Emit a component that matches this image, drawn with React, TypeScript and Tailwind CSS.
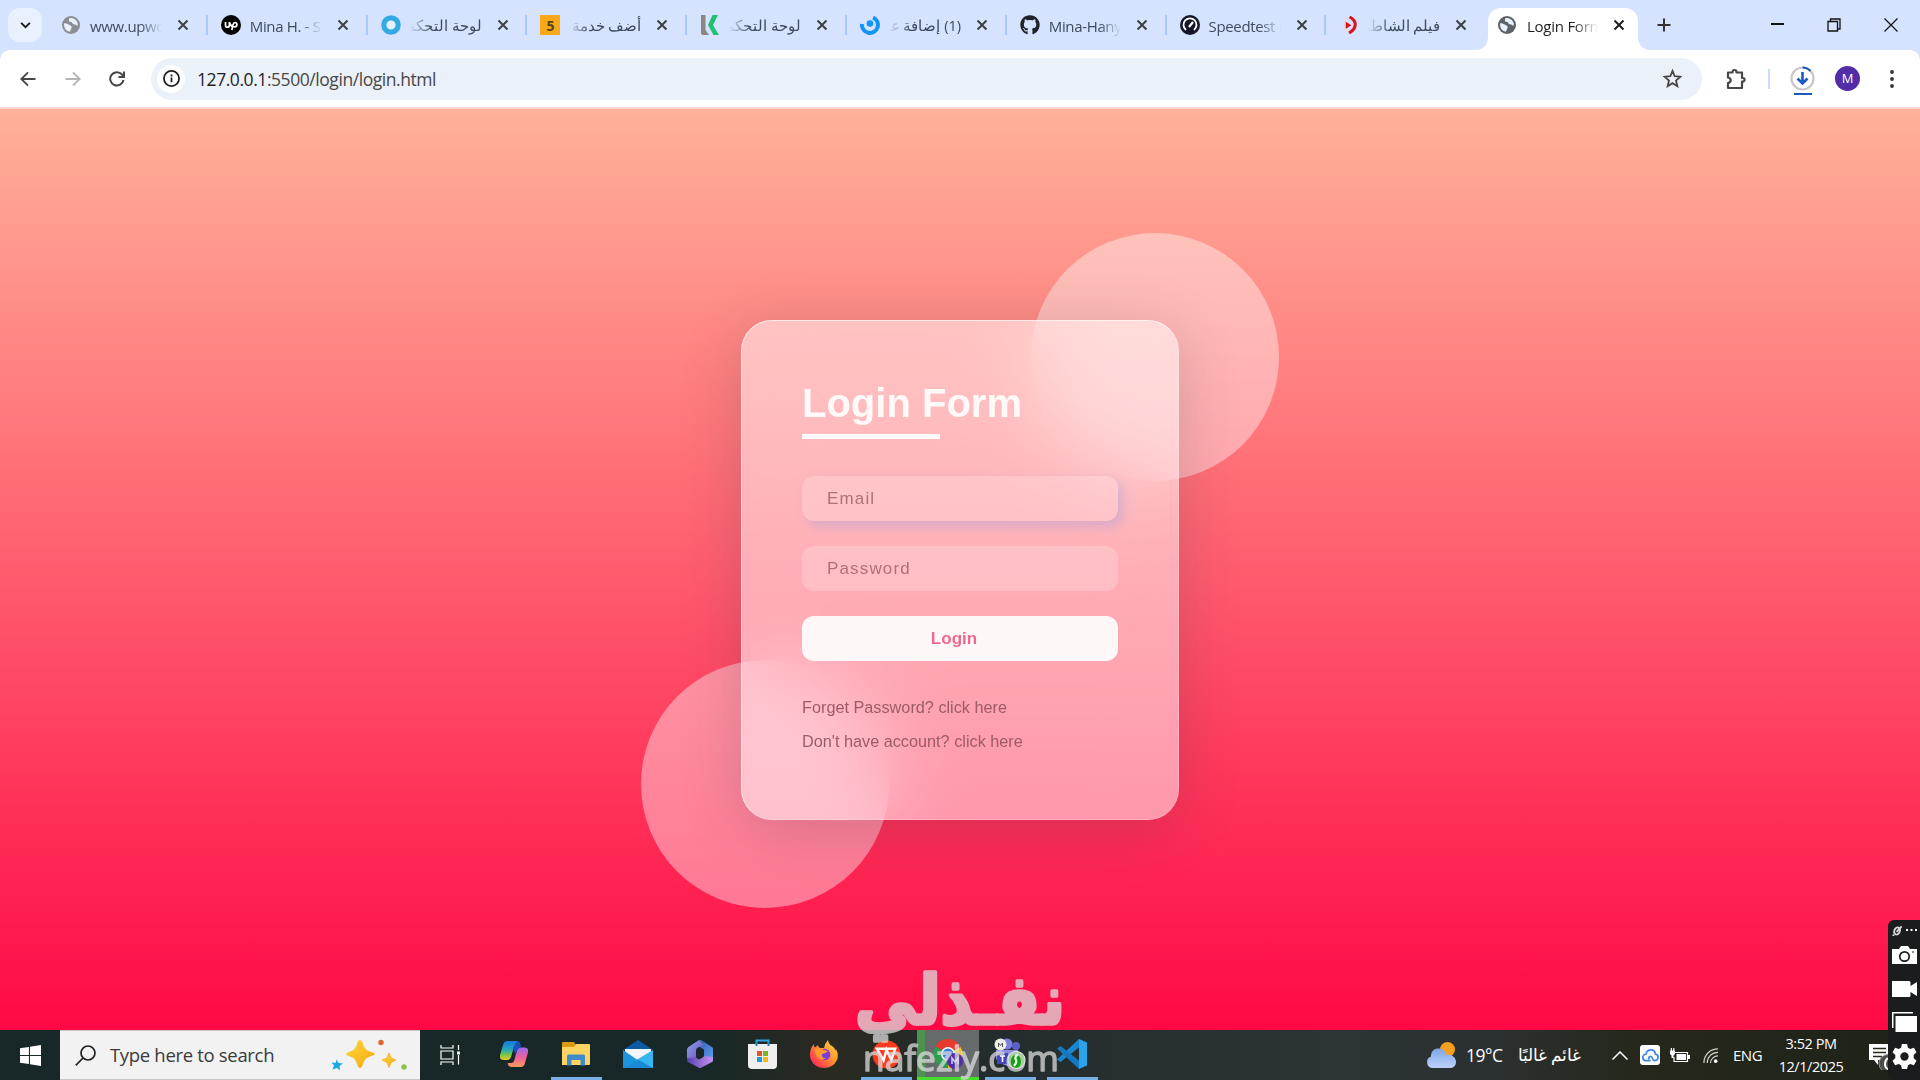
import React from "react";
import { FaGithub } from "react-icons/fa";

type TabData = { title: string; rtl?: boolean; icon: React.ReactNode };

const Globe = ({ color }: { color: string }) => (
  <svg viewBox="0 0 18 18" className="size-[18px]">
    <circle cx="9" cy="9" r="9" fill={color} />
    <path d="M2 7.500 C4 7 5 8 6.500 8.500 C8.500 9.300 10.500 10.500 9.500 12 C8.600 13.200 8.800 15 7.600 15.700 C4 15 2 12.500 2 7.500Z" fill="#e8f0fc" />
    <path d="M7.500 2 C11.500 1.500 15 4 15.800 7.500 C16 10.500 14.500 10 13.500 8.500 C12.300 8.600 10 8.300 10.200 6.800 C10.500 5.500 7.500 6.800 7 5 C6.800 3.500 7.200 2.700 7.500 2Z" fill="#e8f0fc" />
  </svg>
);

const tabs: TabData[] = [
  { title: "www.upwork", icon: <Globe color="#8a8d91" /> },
  {
    title: "Mina H. - Sen",
    icon: (
      <svg viewBox="0 0 20 20" className="size-5">
        <circle cx="10" cy="10" r="10" fill="#000" />
        <path d="M4.500 7v3.200q0 2 1.900 2t1.900-2V7 M8.300 7q1.300 4 3.200 5M10.800 15l1.200-5.200q.6-2.300 2.200-2.300t1.700 2q0 2.300-2 2.300-1.800 0-3.500-2" fill="none" stroke="#fff" strokeWidth="1.700" />
      </svg>
    ),
  },
  {
    title: "لوحة التحكم",
    rtl: true,
    icon: (
      <svg viewBox="0 0 20 20" className="size-5">
        <circle cx="10" cy="10" r="7.200" fill="#e4f1ff" stroke="#35aae2" strokeWidth="5.200" />
      </svg>
    ),
  },
  {
    title: "أضف خدمة",
    rtl: true,
    icon: <span className="flex size-5 items-center justify-center bg-[#f9a81a] text-[14px] font-bold text-[#54430f]">5</span>,
  },
  {
    title: "لوحة التحكم",
    rtl: true,
    icon: (
      <svg viewBox="0 0 18 20" className="h-5 w-[18px]">
        <path d="M0 0h4.500v15l3.500 5H2q-2 0-2-2z" fill="#8a8580" />
        <path d="M11.500 0H17L12 10l6 10h-5.500L7 10z" fill="#1fc274" />
      </svg>
    ),
  },
  {
    title: "(1) إضافة عمل",
    rtl: true,
    icon: (
      <svg viewBox="0 0 20 20" className="size-5">
        <path d="M2 9a8 8 0 1 0 11-6.500" fill="none" stroke="#1295f7" strokeWidth="4" />
        <circle cx="10" cy="8.500" r="3.300" fill="#1295f7" />
      </svg>
    ),
  },
  { title: "Mina-Hany", icon: <FaGithub className="size-5 text-[#1f2328]" /> },
  {
    title: "Speedtest b",
    icon: (
      <svg viewBox="0 0 20 20" className="size-5">
        <circle cx="10" cy="10" r="10" fill="#14152b" />
        <path d="M6 15a6.500 6.500 0 1 1 8 0" fill="none" stroke="#fff" strokeWidth="1.800" />
        <path d="M9 12l4-5" stroke="#fff" strokeWidth="2.200" />
      </svg>
    ),
  },
  {
    title: "فيلم الشاطر",
    rtl: true,
    icon: (
      <svg viewBox="0 0 18 18" className="ml-[3px] size-[18px]">
        <path d="M6 2C1 5 1 12 6 16" fill="none" stroke="#e0dcdc" strokeWidth="2" />
        <path d="M8 0.500q6.500 3.500 6 8.500t-6.500 8.500" fill="none" stroke="#d8121f" strokeWidth="3.200" />
        <path d="M4 5.500l6 3.700L4 13z" fill="#d8121f" />
      </svg>
    ),
  },
];

const Cross = ({ color = "#3c4043" }: { color?: string }) => (
  <svg viewBox="0 0 12 12" className="size-3 shrink-0">
    <path d="M1.500 1.500l9 9M10.500 1.500l-9 9" stroke={color} strokeWidth="2" />
  </svg>
);

function Tab({ tab, divider }: { tab: TabData; divider: boolean }) {
  return (
    <div className="flex h-[50px] w-[159.800px] shrink-0 items-center pl-[13px]">
      <span className="flex w-5 shrink-0 justify-center">{tab.icon}</span>
      {tab.rtl ? (
        <span dir="rtl" className="mt-[2px] ml-[9px] w-[72px] overflow-hidden text-[14.500px] leading-6 tracking-[-0.100px] whitespace-nowrap text-[#3f4a5c] [mask-image:linear-gradient(to_left,black_70%,transparent)]">
          {tab.title}
        </span>
      ) : (
        <span className="mt-[2px] ml-[9px] w-[72px] overflow-hidden text-[15px] leading-6 tracking-[-0.350px] whitespace-nowrap text-[#3f4a5c] [mask-image:linear-gradient(to_right,black_70%,transparent)]">
          {tab.title}
        </span>
      )}
      <span className="ml-[15px] flex w-3">
        <Cross />
      </span>
      {divider && <span className="ml-auto h-5 w-[2px] bg-[#a8c7fa]" />}
    </div>
  );
}

function TabStrip() {
  return (
    <div className="flex h-[50px] bg-[#d5e3ff]">
      <div className="mt-2 ml-2 flex h-[34px] w-[34px] items-center justify-center rounded-xl bg-[#e9f1fe]">
        <svg viewBox="0 0 12 8" className="h-[7px] w-[11px]">
          <path d="M1 1l5 5 5-5" fill="none" stroke="#1f1f1f" strokeWidth="2.200" />
        </svg>
      </div>
      <div className="ml-[6px] flex w-[1431px]">
        {tabs.map((t, i) => (
          <Tab key={i} tab={t} divider={i !== tabs.length - 1} />
        ))}
      </div>
      <div className="-ml-[5px] flex h-[50px] items-end">
        <svg viewBox="0 0 14 14" className="size-[14px]">
          <path d="M14 0v14H0Q14 14 14 0z" fill="#fff" />
        </svg>
        <div className="flex h-[42.500px] w-[150px] items-center rounded-t-[13px] bg-white pb-[7px] pl-[9px]">
          <span className="flex w-5 justify-center">
            <Globe color="#5f6368" />
          </span>
          <span className="mt-[2px] ml-[10px] w-[71px] overflow-hidden text-[15px] leading-6 tracking-[-0.250px] whitespace-nowrap text-[#1f1f1f] [mask-image:linear-gradient(to_right,black_65%,transparent)]">
            Login Form
          </span>
          <span className="ml-[15px] flex">
            <Cross color="#1f1f1f" />
          </span>
        </div>
        <svg viewBox="0 0 14 14" className="size-[14px]">
          <path d="M0 0v14h14Q0 14 0 0z" fill="#fff" />
        </svg>
      </div>
      <div className="flex flex-1 items-center">
        <svg viewBox="0 0 14 14" className="ml-[5px] size-[14px]">
          <path d="M7 .5v13M.5 7h13" stroke="#333" strokeWidth="2" />
        </svg>
        <span className="mb-[2px] ml-[100px] h-[1.500px] w-[13px] bg-[#111]" />
        <svg viewBox="0 0 14 14" className="ml-[43px] size-[14px]" fill="none" stroke="#111" strokeWidth="1.300">
          <path d="M1 3.500h9.500v9.500H1zM3.500 3.500V1H13v10h-2.500" />
        </svg>
        <svg viewBox="0 0 14 14" className="ml-[43px] size-[14px]">
          <path d="M.5 .5l13 13M13.500 .5l-13 13" stroke="#111" strokeWidth="1.200" />
        </svg>
      </div>
    </div>
  );
}

function Toolbar() {
  return (
    <div className="bg-[#d5e3ff]">
      <div className="flex h-[57px] items-center rounded-t-[10px] bg-white pr-[26px] pl-5">
        <svg viewBox="0 0 16 16" className="size-4" fill="none" stroke="#474747" strokeWidth="1.900">
          <path d="M15.500 8H1.500M8 1.300L1.300 8 8 14.700" />
        </svg>
        <svg viewBox="0 0 16 16" className="ml-[29px] size-4" fill="none" stroke="#b4b4b4" strokeWidth="1.900">
          <path d="M.5 8h14M8 1.300L14.700 8 8 14.700" />
        </svg>
        <svg viewBox="0 0 16 16" className="ml-[28px] size-4" fill="none" stroke="#474747" strokeWidth="2">
          <path d="M14.500 9A6.700 6.700 0 1 1 13 3.500L14.500 5.500M15 .5V6H9.500" />
        </svg>
        <div className="ml-[26px] flex h-[42px] w-[1551px] items-center rounded-full bg-[#ebf1f9] pr-5 pl-[6px]">
          <span className="flex size-7 items-center justify-center rounded-full bg-white">
            <svg viewBox="0 0 18 18" className="size-[17px]" fill="none" stroke="#1f1f1f" strokeWidth="1.900">
              <circle cx="9" cy="9" r="8" />
              <path d="M9 8v5M9 4.800v2" />
            </svg>
          </span>
          <span className="mt-[2px] ml-3 text-[17.500px] tracking-[-0.440px] whitespace-nowrap text-[#474747]">
            <span className="text-[#1f1f1f]">127.0.0.1</span>:5500/login/login.html
          </span>
          <svg viewBox="0 0 20 20" className="ml-auto size-[19px]" fill="none" stroke="#474747" strokeWidth="1.900">
            <path d="M10 2l2.300 5.600 6 .5-4.600 4 1.400 6L10 14.900 4.900 18.100l1.400-6-4.600-4 6-.5z" />
          </svg>
        </div>
        <svg viewBox="0 0 22 22" className="ml-[23px] size-[22px]" fill="none" stroke="#474747" strokeWidth="2.200">
          <path d="M3 4.500h4.500V4a2 2 0 0 1 4 0v.5H17V10h.8a1.800 1.800 0 0 1 0 3.600H17V20H3v-5c3.500-.5 3.500-5 0-5.500z" strokeLinejoin="round" />
        </svg>
        <span className="ml-[21px] h-5 w-[2px] bg-[#c9dcfb]" />
        <div className="ml-[20px] flex w-[25px] flex-col items-center pt-1">
          <svg viewBox="0 0 25 25" className="size-[25px]" fill="none">
            <circle cx="12.500" cy="12.500" r="11" stroke="#c7c7cc" strokeWidth="2.200" />
            <path d="M12.500 1.500a11 11 0 0 1 8 3.500" stroke="#1a5bbf" strokeWidth="2.200" />
            <path d="M12.500 6v11M7.500 12.500l5 5 5-5" stroke="#1a5bbf" strokeWidth="2.600" />
          </svg>
          <span className="mt-[2px] h-[2.500px] w-[18px] bg-[#1a5bbf]" />
        </div>
        <span className="ml-5 flex size-[25px] items-center justify-center rounded-full bg-[#512da8] text-[13px] text-white">M</span>
        <svg viewBox="0 0 4 18" className="ml-auto h-[18px] w-[4px]" fill="#333">
          <circle cx="2" cy="2" r="1.900" />
          <circle cx="2" cy="9" r="1.900" />
          <circle cx="2" cy="16" r="1.900" />
        </svg>
      </div>
      <div className="h-[2px] bg-[#f7d7d0]" />
    </div>
  );
}

function LoginPage() {
  return (
    <div className="flex h-[921px] items-center justify-center bg-[linear-gradient(to_bottom,#ffb199,#ff0844)] font-['Liberation_Sans',Arial,sans-serif]">
      <div className="relative h-[500px] w-[438px]">
        <span className="absolute -top-[87px] -right-[100px] size-[248px] rounded-full bg-white/40" />
        <span className="absolute -bottom-[88px] -left-[100px] size-[248px] rounded-full bg-white/40" />
        <div className="relative flex h-full flex-col rounded-[31px] border border-t-white/60 border-r-white/20 border-b-white/20 border-l-white/60 bg-white/50 px-[60px] pt-[60px] shadow-[0_10px_62px_rgba(45,50,60,0.2)] backdrop-blur-[38px]">
          <h1 className="-mt-[1px] text-[40px] leading-[46px] font-bold whitespace-nowrap text-[#fff9f8]">Login Form</h1>
          <span className="mt-[8px] h-[5px] w-[138px] bg-[#fff9f8]" />
          <div className="mt-[37px] flex h-[45px] items-center rounded-[12px] bg-white/20 pt-[2px] pl-[25px] text-[17px] tracking-[1.150px] text-[#ac7278] shadow-[5px_5px_12px_rgba(150,160,225,0.4)]">
            Email
          </div>
          <div className="mt-[25px] flex h-[45px] items-center rounded-[12px] bg-white/20 pt-[2px] pl-[25px] text-[17px] tracking-[1.150px] text-[#ac7278]">
            Password
          </div>
          <button className="mt-[25px] flex h-[45px] items-center justify-center rounded-[12px] bg-[#fdf8f7] pt-[2px] pr-[12px] text-[17px] font-bold text-[#ec6a90]">
            Login
          </button>
          <p className="mt-[37px] text-[16.250px] leading-[19px] text-[#9c5b67]">Forget Password? click here</p>
          <p className="mt-[15px] text-[16.250px] leading-[19px] text-[#9c5b67]">Don't have account? click here</p>
        </div>
      </div>
    </div>
  );
}

const Copilot = () => (
  <svg viewBox="0 0 28 26" className="h-[26px] w-7">
    <defs>
      <linearGradient id="cpA" x1="0" y1="0" x2="0" y2="1">
        <stop offset="0" stopColor="#1675e0" />
        <stop offset=".45" stopColor="#25a8b8" />
        <stop offset=".75" stopColor="#7ec93f" />
        <stop offset="1" stopColor="#f0c62c" />
      </linearGradient>
      <linearGradient id="cpB" x1="0" y1="0" x2="0" y2="1">
        <stop offset="0" stopColor="#9a6be8" />
        <stop offset=".5" stopColor="#ee5f9d" />
        <stop offset="1" stopColor="#fb9b57" />
      </linearGradient>
    </defs>
    <path d="M7 0h10q2.500 0 3.500 4h-4q-2 0-2.700 2.500L11 16q-1 3-4 3H4q-5 0-4-5L3 4q1-4 4-4z" fill="url(#cpA)" />
    <path d="M21 6.500h3.500q4.500 0 3.500 5L25 22q-1 4-4 4H11q-2.500 0-3.500-4H11q2.500 0 3.200-2.500l2.800-10q1-3 4-3z" fill="url(#cpB)" />
    <path d="M17 0q2.500 0 3.500 4l.7 2.500q-3.200.2-4.200 3.500l-1.200 4L13 7z" fill="#1c4fc0" />
  </svg>
);

const Explorer = () => (
  <svg viewBox="0 0 28 24" className="h-6 w-7">
    <path d="M0 1q0-1 1-1h11l2 3v4H0z" fill="#d99b12" />
    <path d="M0 5h12l2-3h13q1 0 1 1v19q0 1-1 1H0z" fill="#fcd462" />
    <path d="M5 23.500V14q0-1.500 1.500-1.500h15Q23 12.500 23 14v9.500h-4.500V18h-9v5.500z" fill="#3f8ac9" />
  </svg>
);

const Mail = () => (
  <svg viewBox="0 0 30 28" className="h-7 w-[30px]">
    <path d="M0 10L15 0l15 10z" fill="#0c59a4" />
    <path d="M2 9h26v12H2z" fill="#f2f5fb" />
    <path d="M0 10l16 11L0 28z" fill="#1c94dc" />
    <path d="M30 10v18H0z" fill="#35b6ef" />
    <path d="M30 28L15 19.500 0 28z" fill="#1b8ad6" />
  </svg>
);

const M365 = () => (
  <svg viewBox="0 0 26 28" className="h-7 w-[26px]">
    <defs>
      <linearGradient id="mA" x1="0" y1="0" x2="1" y2="1">
        <stop offset="0" stopColor="#8fa4ea" />
        <stop offset="1" stopColor="#6a4cc0" />
      </linearGradient>
      <linearGradient id="mB" x1="0" y1="0" x2="1" y2="0">
        <stop offset="0" stopColor="#5a3fb0" />
        <stop offset="1" stopColor="#c793f3" />
      </linearGradient>
      <linearGradient id="mC" x1="0" y1="0" x2="1" y2="1">
        <stop offset="0" stopColor="#2f5aa8" />
        <stop offset="1" stopColor="#62a0f5" />
      </linearGradient>
    </defs>
    <path d="M12 0q1-.5 2 0l11 7q1 .6 1 2v11q0 1.500-1.500 2L17 18V9.500L9 5z" fill="url(#mC)" />
    <path d="M12 0L1.500 7Q0 8 0 9.500V20l9-2.500v-7q0-2 2-3l5-2.500z" fill="url(#mA)" />
    <path d="M0 18v2q0 1.200 1 1.900L12 27.700q1 .5 2 0L25 22q1-.8 1-2v-3l-9-1-4 3q-1 .6-2 0l-2-1.500z" fill="url(#mB)" />
    <path d="M13 8.800l4 2.500v5l-4 2.700-4-2.700v-5z" fill="#1a2628" />
  </svg>
);

const Store = () => (
  <svg viewBox="0 0 29 30" className="h-[30px] w-[29px]">
    <path d="M8.500 7V1.500h12V7" fill="none" stroke="#2ba6de" strokeWidth="2" />
    <path d="M0 5h29v21q0 4-4 4H4q-4 0-4-4z" fill="#efefef" />
    <path d="M9 12h5v5H9z" fill="#e4572e" />
    <path d="M15 12h5v5h-5z" fill="#7bb528" />
    <path d="M9 18h5v5H9z" fill="#1c9bd8" />
    <path d="M15 18h5v5h-5z" fill="#f5b81a" />
    <path d="M8.500 7V3M20.500 7V3" stroke="#1583b8" strokeWidth="2" />
  </svg>
);

const Firefox = () => (
  <svg viewBox="0 0 28 28" className="size-7">
    <defs>
      <linearGradient id="ffA" x1="1" y1="0" x2="0" y2="1">
        <stop offset="0" stopColor="#ffe53f" />
        <stop offset=".45" stopColor="#ff9130" />
        <stop offset=".8" stopColor="#ff3d50" />
        <stop offset="1" stopColor="#e3197c" />
      </linearGradient>
    </defs>
    <path d="M3.500 4q0 2 1.500 3.500L8 5q0 2 2 3h4q1-5 4-8 .5 4 4 6t3 5l1-2q3 6 1 11-4 8-13 8T1 20Q-2 12 3.500 4z" fill="url(#ffA)" />
    <circle cx="14.500" cy="14.500" r="5.800" fill="#7a3be0" />
    <path d="M5 9q4-2 9 1l4 1q-2 2.500-6 3-1 4 4 4.500-6 3-9-2T5 9z" fill="#ff9a2c" />
  </svg>
);

const Wps = () => (
  <svg viewBox="0 0 30 30" className="size-[29px]">
    <circle cx="15" cy="15" r="14.500" fill="#fb3b1e" />
    <path d="M5 9h19l-4 12-5-11-3 11z" fill="none" stroke="#fff" strokeWidth="2.500" />
  </svg>
);

const Chrome = () => (
  <svg viewBox="0 0 30 30" className="size-[30px]">
    <path d="M15 15L2.500 7.500A14 14 0 0 1 27.500 8z" fill="#e53a2e" />
    <path d="M15 15l12.500-7A14 14 0 0 1 15 29z" fill="#fbc116" />
    <path d="M15 15v14A14 14 0 0 1 2.500 7.500z" fill="#2b9f4b" />
    <circle cx="15" cy="15" r="7" fill="#fff" />
    <circle cx="15" cy="15" r="5.500" fill="#3b7ded" />
    <circle cx="22" cy="22" r="8" fill="#512da8" />
    <path d="M19 25v-6l3 4 3-4v6" fill="none" stroke="#d8c9f5" strokeWidth="1.500" />
  </svg>
);

const Teams = () => (
  <svg viewBox="0 0 32 32" className="size-8">
    <path d="M2 12h22v9q0 7-8 7T2 21z" fill="#8b8ce8" />
    <circle cx="13" cy="6" r="5.500" fill="#7d7fe0" />
    <circle cx="22" cy="8" r="4" fill="#5b5fc7" />
    <path d="M3 15h11v11H3z" fill="#4347b8" />
    <path d="M6 18h5M8.500 18v6" stroke="#fff" strokeWidth="1.600" />
    <circle cx="6.500" cy="6.500" r="6" fill="#eceee4" />
    <path d="M4.500 9V5l2 2.500 2-2.500v4" fill="none" stroke="#555" />
    <circle cx="22.500" cy="22" r="9" fill="#fff" />
    <circle cx="22.500" cy="22" r="8" fill="#13a10e" />
    <path d="M24 16q-4 3-2 6 1 3-2 6" fill="none" stroke="#fff" strokeWidth="2.200" />
  </svg>
);

const VsCode = () => (
  <svg viewBox="0 0 30 30" className="size-[30px]">
    <path d="M22 0l8 3.500v23L22 30z" fill="#2aa3ea" />
    <path d="M22 0v8.500L3.500 23 0 20.500z" fill="#1a86d2" />
    <path d="M22 30v-8.500L3.500 7 0 9.500z" fill="#1478c0" />
  </svg>
);

const TaskView = () => (
  <svg viewBox="0 0 20 20" className="size-5" fill="none" stroke="#fff" strokeWidth="1.200">
    <path d="M1 0v3h12V0M1 20v-3h12v3M1 6h12v8H1zM18.500 0v5M18.500 10v9.500" />
    <path d="M17 6.500h3v3h-3z" fill="#fff" stroke="none" />
  </svg>
);

const apps: { icon: React.ReactNode; bar?: string }[] = [
  { icon: <Copilot /> },
  { icon: <Explorer />, bar: "blue" },
  { icon: <Mail /> },
  { icon: <M365 /> },
  { icon: <Store /> },
  { icon: <Firefox /> },
  { icon: <Wps />, bar: "blue" },
  { icon: <Chrome />, bar: "green" },
  { icon: <Teams />, bar: "blue" },
  { icon: <VsCode />, bar: "blue" },
];

function Taskbar() {
  return (
    <div className="flex h-[50px] bg-[linear-gradient(to_right,#182828_0%,#182828_37%,#2a2a20_43%,#232c2c_50%,#2c3436_70%,#2b3030_78%,#25281b_85%,#1f2217_100%)]">
      <div className="flex w-[60px] items-center justify-center">
        <svg viewBox="0 0 20 20" className="size-[21px]" fill="#fff">
          <path d="M0 3l8.500-1.200v7.700H0zM9.500 1.600L20 0v9.500H9.500zM0 10.500h8.500v7.700L0 17zM9.500 10.500H20V20L9.500 18.400z" />
        </svg>
      </div>
      <div className="flex w-[360px] items-center border-y border-[#c8c8c8] bg-[#f2f2f2] pl-[15px]">
        <svg viewBox="0 0 21 21" className="size-[21px]" fill="none" stroke="#222" strokeWidth="1.700">
          <circle cx="13" cy="8" r="7" />
          <path d="M8 13L.8 20.300" />
        </svg>
        <span className="ml-[14px] text-[18.500px] tracking-[-0.320px] whitespace-nowrap text-[#3a3a3a]">Type here to search</span>
        <svg viewBox="0 0 76 32" className="mr-[13px] ml-auto h-8 w-[76px]">
          <defs>
            <linearGradient id="st" x1="0" y1="0" x2="1" y2="1">
              <stop offset="0" stopColor="#ffd93b" />
              <stop offset="1" stopColor="#f3a712" />
            </linearGradient>
          </defs>
          <path d="M29 1q2 0 3 4 1.500 6 7 7.500 5 1.500 5 2.500t-5 2.500Q33.500 19 32 25q-1 4-3 4t-3-4q-1.500-6-7-7.500-4-1.500-4-2.500t4-2.500Q24.500 11 26 5q1-4 3-4z" fill="url(#st)" />
          <path d="M58 14l2 5 5 2-5 2.500-2 5-2-5-5-2.500 5-2z" fill="url(#st)" stroke="#f5b92a" />
          <path d="M6 20q.5 3.500 1.500 4l4.500.5-3.500 2.500.5 4.500-3-2.500-4.500 1.500 1.500-4-2.500-3 4 .5z" fill="#19a9e5" />
          <circle cx="50" cy="3.500" r="2.700" fill="#e0652b" />
          <circle cx="73" cy="28" r="2.700" fill="#8bc34a" />
        </svg>
      </div>
      <div className="flex w-[63px] items-center justify-center pr-[3px] pb-[1px]">
        <TaskView />
      </div>
      {apps.map((a, i) => (
        <div
          key={i}
          className={`flex w-[62px] flex-col items-center ${a.bar === "green" ? "bg-[linear-gradient(to_right,#4d9350_13%,#656a6a_13%)]" : ""}`}
        >
          <div className="flex flex-1 items-center pt-[1px]">{a.icon}</div>
          <span className={`h-[3px] ${a.bar === "green" ? "w-full bg-[#45dc2c]" : a.bar ? "w-[51px] bg-[#76b0e6]" : "w-0"}`} />
        </div>
      ))}
      <div className="ml-auto flex items-center pr-[32px] text-white">
        <svg viewBox="0 0 30 26" className="h-[26px] w-[30px]">
          <defs>
            <linearGradient id="cl" x1="0" y1="0" x2="0" y2="1">
              <stop offset="0" stopColor="#7ea6e8" />
              <stop offset="1" stopColor="#bcd1fa" />
            </linearGradient>
          </defs>
          <circle cx="21.500" cy="7.500" r="7.500" fill="#f7a01f" />
          <path d="M6 26a6 6 0 0 1-1-11.500C5 9 8 6.500 12.500 6.500c4 0 7 2.500 7.500 6 6 0 10 2.500 10 7.500 0 4-3 6-6 6z" fill="url(#cl)" />
        </svg>
        <span className="ml-[10px] w-[38px] text-[17.500px] tracking-[-0.500px] whitespace-nowrap">19°C</span>
        <span dir="rtl" className="ml-[6px] w-[71px] text-[16.500px] whitespace-nowrap">
          غائم غالبًا
        </span>
        <svg viewBox="0 0 16 9" className="ml-[31px] h-[9px] w-4" fill="none" stroke="#fff" strokeWidth="1.500">
          <path d="M.5 8.500L8 1l7.500 7.500" />
        </svg>
        <span className="ml-3 flex size-5 items-center justify-center rounded-[3px] bg-white">
          <svg viewBox="0 0 18 14" className="h-[13px] w-[17px]" fill="none" stroke="#3d86e8" strokeWidth="1.800">
            <path d="M9 12.500H4.500a3.500 3.500 0 0 1-.5-7C5 2 7 1 9.500 1c3 0 4.500 2 4.700 4.500C18.500 6 18 12.500 13.500 12.500 10 12.500 12 8 9 8c-2 0-2.500 2.500-1 3" />
          </svg>
        </span>
        <svg viewBox="0 0 20 15" className="ml-[10px] h-[15px] w-5">
          <path d="M5 4.500h12.500v9H4V9" fill="none" stroke="#fff" strokeWidth="1.200" />
          <path d="M6.500 6h9.500v6H6.500zM18 7h2v4h-2zM0 2.500h5V6L3.500 7.500v2.500h-2V7.500L0 6zM.8 0h1.200v3H.8zM3.200 0h1.200v3H3.200z" fill="#fff" />
        </svg>
        <svg viewBox="0 0 16 16" className="ml-[13px] size-[15px]" fill="none" stroke="#d0d0c8" strokeWidth="1.300">
          <path d="M1 16C1 7 8 1 16 1M4.500 16C4.500 9.500 9.500 4.700 16 4.700M8 16c0-4 3.500-7.500 8-7.500" />
          <circle cx="13.500" cy="14" r="1.900" fill="#fff" stroke="none" />
        </svg>
        <span className="ml-[15px] w-[29px] text-[15px] tracking-[-0.500px]">ENG</span>
        <span className="ml-[15px] flex w-[68px] flex-col items-center text-[14.500px] leading-[23px] tracking-[-0.450px] whitespace-nowrap">
          <span>3:52 PM</span>
          <span>12/1/2025</span>
        </span>
        <svg viewBox="0 0 19 30" className="ml-[24px] h-[30px] w-[19px]">
          <path d="M0 4h19v16H9v5l-4-5H0z" fill="#fff" />
          <path d="M4 8.500h13M4 12.500h13M4 16.500h9" stroke="#25281b" strokeWidth="1.400" />
          <circle cx="19" cy="23.500" r="9" fill="#4a4c48" stroke="#999" />
          <path d="M19 18q-3 2-3 6t3 5" fill="none" stroke="#fff" strokeWidth="2" />
        </svg>
      </div>
    </div>
  );
}

function CapturePanel() {
  return (
    <div className="absolute top-[920px] right-0 flex h-[160px] w-8 flex-col items-center rounded-l-md bg-[#1b1c1d] pr-[3px] pl-1">
      <div className="mt-[3px] flex h-[14px] w-full items-center justify-between">
        <svg viewBox="0 0 12 12" className="size-[11px]" fill="none" stroke="#ddd" strokeWidth="2">
          <ellipse cx="5.500" cy="6.500" rx="3" ry="4" transform="rotate(25 5.500 6.500)" />
          <path d="M5 7.500l5.500-6M2.500 11l-2 .5" />
        </svg>
        <svg viewBox="0 0 11 3" className="h-[3px] w-[11px]" fill="#fff">
          <path d="M0 0h2v2H0zM4.500 0h2v2h-2zM9 0h2v2H9z" />
        </svg>
      </div>
      <svg viewBox="0 0 25 18" className="mt-[9px] h-[18px] w-[25px]">
        <path d="M0 3h7l2-3h7l2 3h7v15H0z" fill="#fff" />
        <circle cx="12.500" cy="10.500" r="4.700" fill="none" stroke="#1b1c1d" strokeWidth="1.700" />
        <path d="M20 6h2" stroke="#1b1c1d" />
      </svg>
      <svg viewBox="0 0 25 16" className="mt-[17px] h-4 w-[25px]" fill="#fff">
        <path d="M0 0h17q1.500 0 1.500 1.500V5L25 1v14l-6.500-4v3.500q0 1.500-1.500 1.500H0z" />
      </svg>
      <svg viewBox="0 0 25 20" className="mt-[15px] h-5 w-[25px]">
        <path d="M.5 16V.5H21" fill="none" stroke="#fff" strokeWidth="2" />
        <path d="M3.500 4H25v16H3.500z" fill="#fff" />
      </svg>
      <svg viewBox="0 0 24 24" className="mt-[12px] size-[25px]">
        <path
          d="M9.500 0h5l.8 3.600 2.200 1.200L21 3.600l2.500 4.400-2.700 2.600v2.800l2.700 2.600L21 20.400l-3.500-1.200-2.200 1.200-.8 3.600h-5l-.8-3.600-2.200-1.200L3 20.400.5 16l2.700-2.600v-2.800L.5 8 3 3.600l3.500 1.200 2.200-1.200z"
          fill="#fff"
        />
        <circle cx="12" cy="12" r="4" fill="#1b1c1d" />
      </svg>
    </div>
  );
}

function Watermark() {
  return (
    <svg viewBox="0 0 240 112" className="pointer-events-none absolute top-[968px] left-[840px] h-[112px] w-[240px] opacity-75" fill="#dcdcdc" stroke="#dcdcdc" strokeLinejoin="round">
      <g transform="translate(0 56) scale(1 1.220)">
        <text x="120" y="0" direction="rtl" textAnchor="middle" textLength="210" lengthAdjust="spacingAndGlyphs" fontFamily="DejaVu Sans, sans-serif" fontWeight="700" fontSize="56" strokeWidth="3">
          نفـذلي
        </text>
      </g>
      <text x="23" y="103" textLength="196" lengthAdjust="spacingAndGlyphs" fontFamily="Open Sans, sans-serif" fontWeight="500" fontSize="35" strokeWidth="1.400">
        nafezly.com
      </text>
    </svg>
  );
}

export default function App() {
  return (
    <div className="relative h-[1080px] w-[1920px] overflow-hidden font-['Open_Sans','Noto_Sans',sans-serif]">
      <TabStrip />
      <Toolbar />
      <LoginPage />
      <Taskbar />
      <CapturePanel />
      <Watermark />
    </div>
  );
}
